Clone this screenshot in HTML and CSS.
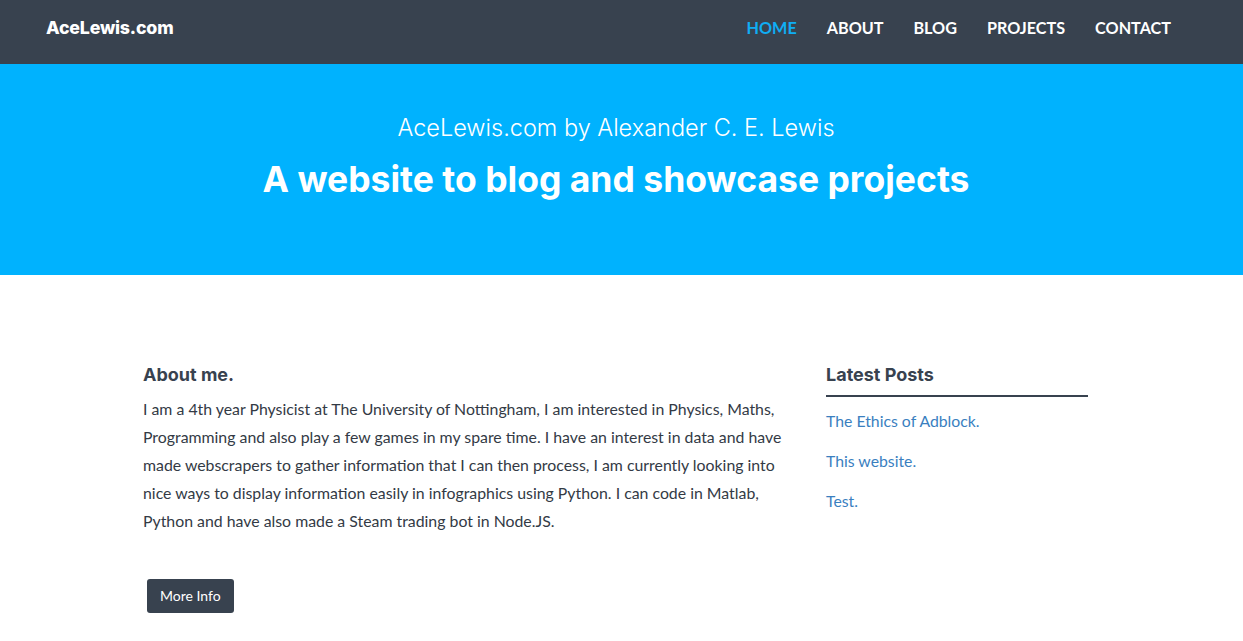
FILE: index.html
```html
<!DOCTYPE html>
<html lang="en">
<head>
<meta charset="utf-8">
<title>AceLewis.com</title>
<link rel="stylesheet" href="styles.css">
</head>
<body>
<header class="navbar">
  <a class="brand" href="#">AceLewis.com</a>
  <nav class="nav">
    <a class="nav-link active" href="#">HOME</a>
    <a class="nav-link" href="#">ABOUT</a>
    <a class="nav-link" href="#">BLOG</a>
    <a class="nav-link" href="#">PROJECTS</a>
    <a class="nav-link" href="#">CONTACT</a>
  </nav>
</header>
<section class="hero">
  <p class="hero-sub">AceLewis.com by Alexander C. E. Lewis</p>
  <h1 class="hero-title">A website to blog and showcase projects</h1>
</section>
<main class="content">
  <div class="about">
    <h2 class="about-title">About me.</h2>
    <p class="about-text">I am a 4th year Physicist at The University of Nottingham, I am interested in Physics, Maths, Programming and also play a few games in my spare time. I have an interest in data and have made webscrapers to gather information that I can then process, I am currently looking into nice ways to display information easily in infographics using Python. I can code in Matlab, Python and have also made a Steam trading bot in Node.JS.</p>
    <a class="btn" href="#">More Info</a>
  </div>
  <aside class="posts">
    <h2 class="posts-title">Latest Posts</h2>
    <ul class="post-list">
      <li><a href="#">The Ethics of Adblock.</a></li>
      <li><a href="#">This website.</a></li>
      <li><a href="#">Test.</a></li>
    </ul>
  </aside>
</main>
</body>
</html>
```
FILE: styles.css
```css
* { box-sizing: border-box; }
html, body { margin: 0; padding: 0; }
body {
  font-family: "Lato", "Liberation Sans", sans-serif;
  color: #333a45;
  background: #fff;
}
a { text-decoration: none; }

.navbar {
  height: 64px;
  background: #38424f;
  display: flex;
  align-items: flex-start;
  justify-content: space-between;
  padding: 17px 72px 0 46px;
}
.brand {
  font-family: "Inter", "Noto Sans", sans-serif;
  font-weight: 800;
  font-size: 17.8px;
  line-height: 22px;
  color: #fff;
  letter-spacing: -0.2px;
}
.nav {
  display: flex;
  gap: 30px;
}
.nav-link {
  font-family: "Lato", sans-serif;
  font-weight: 700;
  font-size: 16.2px;
  line-height: 22px;
  color: #fff;
}
.nav-link.active { color: #0fadf3; }

.hero {
  background: #00b2fe;
  height: 211px;
  text-align: center;
  color: #fff;
  padding: 50px 11px 0 0;
}
.hero-sub {
  margin: 0;
  font-family: "Inter", "Noto Sans", sans-serif;
  font-weight: 300;
  font-size: 23.5px;
  line-height: 28px;
}
.hero-title {
  margin: 18px 0 0;
  font-family: "Inter", "Noto Sans", sans-serif;
  font-weight: 700;
  font-size: 35.5px;
  line-height: 40px;
}

.content {
  display: grid;
  grid-template-columns: 640px 262px;
  column-gap: 43px;
  padding: 88px 0 0 143px;
}
.about-title, .posts-title {
  margin: 0;
  font-family: "Inter", "Noto Sans", sans-serif;
  font-weight: 700;
  font-size: 18px;
  line-height: 24px;
  color: #38424f;
}
.about-text {
  margin: 8px 0 0;
  font-size: 15.85px;
  line-height: 28px;
  color: #333a45;
}
.btn {
  display: inline-block;
  margin: 44px 0 0 4px;
  background: #38424f;
  color: #fff;
  font-size: 14px;
  line-height: 20px;
  padding: 7px 13px;
  border-radius: 3px;
}
.posts-title {
  padding-bottom: 8px;
  border-bottom: 2px solid #38424f;
}
.post-list {
  list-style: none;
  margin: 0;
  padding: 14px 0 0;
}
.post-list li {
  font-size: 15.8px;
  line-height: 20px;
  margin-bottom: 20px;
}
.post-list a { color: #3a7fbf; }
```
